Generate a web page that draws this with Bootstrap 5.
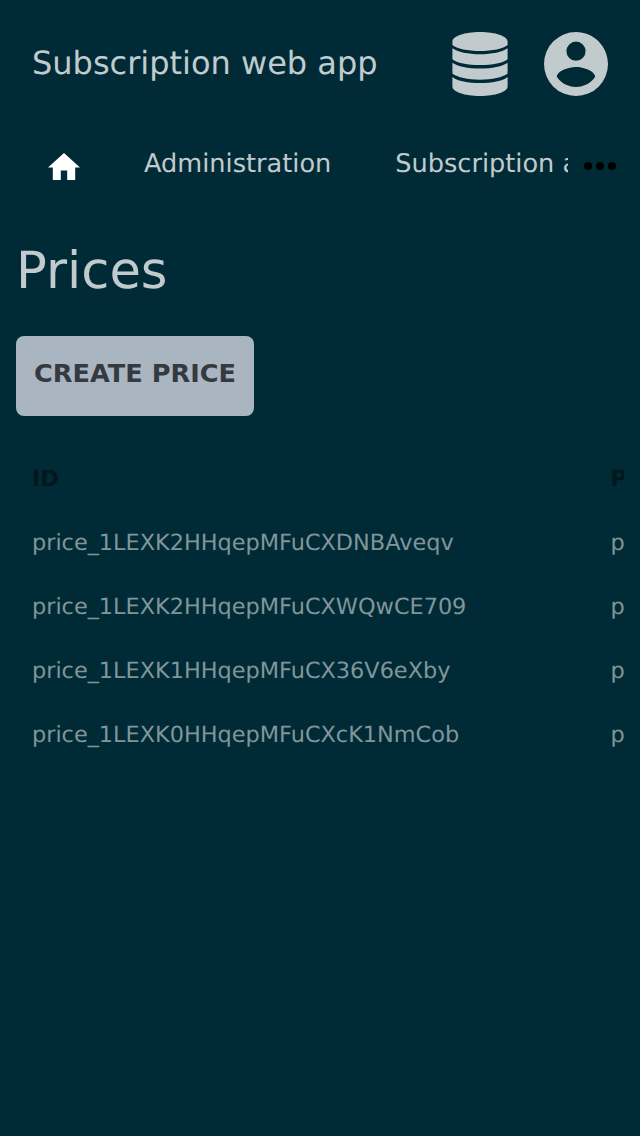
<!DOCTYPE html>
<html lang="en">
<head>
<meta charset="utf-8">
<meta name="viewport" content="width=device-width, initial-scale=1">
<title>Subscription web app</title>
<link href="https://cdn.jsdelivr.net/npm/bootstrap@5.3.0/dist/css/bootstrap.min.css" rel="stylesheet">
<style>
  body { background: #002b36; color: #c1cbce; font-family: "DejaVu Sans", sans-serif; text-rendering: geometricPrecision; }
  .app-header { height: 128px; }
  .app-title { font-size: 32px; line-height: 48px; padding-bottom: 2px; }
  .header-icons { gap: 36px; }
  .app-tabs { height: 72px; }
  .tab-strip { width: 568px; height: 72px; }
  .tab-strip .nav-link { color: #c1cbce; font-size: 25.6px; line-height: 38px; padding: 17px 32px; }
  .tab-strip .home-link { padding: 24.6px 32px 0 48px; }
  .page-title { font-size: 51.2px; line-height: 62px; font-weight: 400; margin-bottom: 34px; }
  .create-btn, .create-btn:hover { width: 238px; height: 80px; background: #a9b5c1; color: #343a40; border: 0; border-radius: 8px; font-size: 25.6px; font-weight: 700; line-height: 38px; padding: 0 0 6px; }
  .table-wrap { padding-top: 31px; }
  .price-table { width: 900px; font-size: 22.38px; table-layout: fixed; --bs-table-bg: transparent; }
  .price-table th, .price-table td { height: 64px; line-height: 32px; padding: 16px; border: 0; }
  .price-table > thead th { color: #00171d; }
  .price-table > tbody td { color: #80959b; }
  .price-table .id-col { width: 578.6px; }
</style>
</head>
<body>
<header class="app-header d-flex align-items-center justify-content-between px-4 mx-2">
  <span class="app-title text-nowrap">Subscription web app</span>
  <div class="header-icons d-flex">
    <svg width="56" height="64" viewBox="0 0 56 64" fill="currentColor"><path d="M.4 9.500C.4 4.200 12.500 0 28 0s27.600 4.200 27.600 9.500v3.500C51.500 16.700 40 19 28 19S4.500 16.700.4 13zM.4 16.300C5.400 20.100 16 22.300 28 22.300s22.600-2.200 27.600-6v10.900C51.500 30.700 40 33.100 28 33.100S4.500 30.700.4 27.200zM.4 30.700C5.400 34.500 16 36.500 28 36.500s22.600-2 27.600-5.800v10.900C50.600 45.500 40 47.700 28 47.700S5.400 45.500.4 41.600zM.4 45C5.400 49 16 51.100 28 51.100S50.600 49 55.600 45v9.500C55.600 59.800 43.500 64 28 64S.4 59.800.4 54.500z"/></svg>
    <svg width="64" height="64" viewBox="2 2 20 20" fill="currentColor"><path d="M12,19.2C9.500,19.2 7.290,17.920 6,16C6.030,14 10,12.900 12,12.900C14,12.900 17.970,14 18,16C16.710,17.920 14.500,19.2 12,19.2M12,5A3,3 0 0,1 15,8A3,3 0 0,1 12,11A3,3 0 0,1 9,8A3,3 0 0,1 12,5M12,2A10,10 0 0,0 2,12A10,10 0 0,0 12,22A10,10 0 0,0 22,12C22,6.470 17.500,2 12,2Z"/></svg>
  </div>
</header>
<nav class="app-tabs d-flex">
  <div class="tab-strip nav flex-nowrap overflow-hidden text-nowrap">
    <a class="nav-link home-link" href="#" aria-label="Home"><svg class="d-block" width="32" height="27.200" viewBox="2 3 20 17" fill="#fff"><path d="M10,20V14H14V20H19V12H22L12,3L2,12H5V20H10Z"/></svg></a>
    <a class="nav-link" href="#">Administration</a>
    <a class="nav-link" href="#">Subscription admin</a>
  </div>
  <svg class="ms-3" width="32" height="76" viewBox="0 0 32 76"><circle cx="4" cy="38" r="4"/><circle cx="16" cy="38" r="4"/><circle cx="28" cy="38" r="4"/></svg>
</nav>
<main class="px-3 pt-4 mt-3">
  <h1 class="page-title">Prices</h1>
  <button class="btn create-btn d-block text-uppercase">Create price</button>
  <div class="table-wrap overflow-hidden">
    <table class="table price-table mb-0">
      <thead><tr><th class="id-col">ID</th><th>Product</th></tr></thead>
      <tbody>
        <tr><td>price_1LEXK2HHqepMFuCXDNBAveqv</td><td>prod</td></tr>
        <tr><td>price_1LEXK2HHqepMFuCXWQwCE709</td><td>prod</td></tr>
        <tr><td>price_1LEXK1HHqepMFuCX36V6eXby</td><td>prod</td></tr>
        <tr><td>price_1LEXK0HHqepMFuCXcK1NmCob</td><td>prod</td></tr>
      </tbody>
    </table>
  </div>
</main>
<script src="https://cdn.jsdelivr.net/npm/bootstrap@5.3.0/dist/js/bootstrap.bundle.min.js"></script>
</body>
</html>
